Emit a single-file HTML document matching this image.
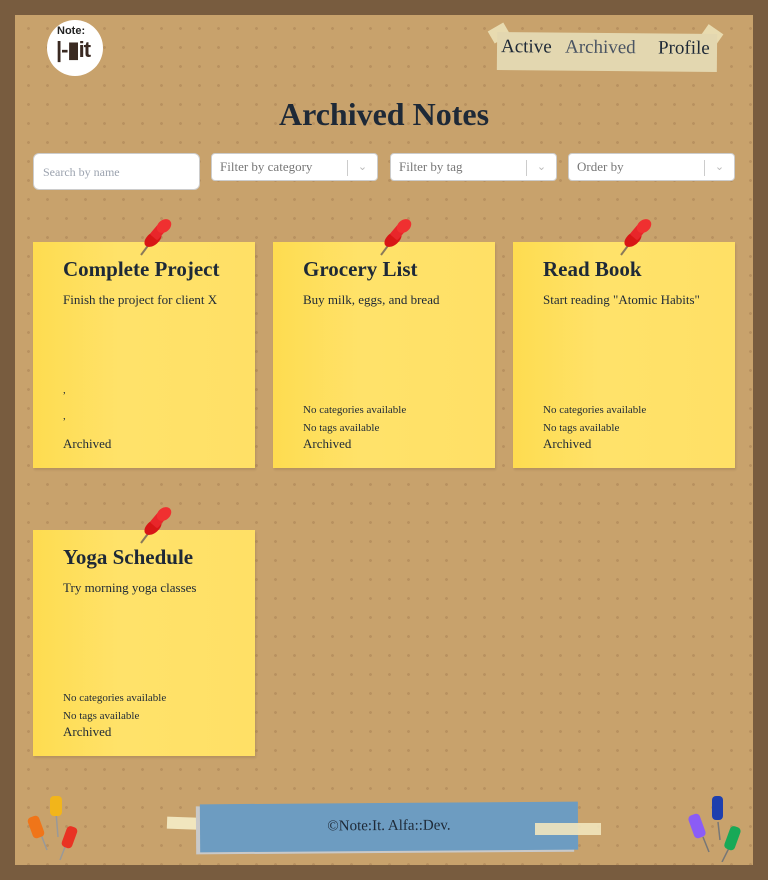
<!DOCTYPE html>
<html><head><meta charset="utf-8"><style>
*{box-sizing:border-box;margin:0;padding:0}
body{width:768px;height:880px;background:#785c3f;font-family:"Liberation Serif",serif;color:#1e2937;position:relative;overflow:hidden}
.board{position:absolute;left:15px;top:15px;width:738px;height:850px;background-color:#c8a26c;background-image:radial-gradient(circle,#b89160 1.3px,transparent 1.6px);background-size:19px 19px;background-position:4px 4px}
.logo{position:absolute;left:47px;top:20px;width:56px;height:56px;border-radius:50%;background:#fff}
.logo .a{position:absolute;left:10px;top:5px;font:bold 11px "Liberation Sans",sans-serif;color:#222}
.logo .b{position:absolute;left:9px;top:17px;font:bold 22px "Liberation Sans",sans-serif;color:#3a2a22;letter-spacing:-1px}
.nav{position:absolute;left:497px;top:33px;width:220px;height:38px;background:#e3d7b0;transform:rotate(.5deg)}
.nav span{position:absolute;top:4px;font-size:19px}
.title{position:absolute;top:96px;width:768px;text-align:center;font-size:32px;font-weight:bold}
.inp{position:absolute;background:#fff;border:1px solid #ccc;border-radius:4px;font-size:13px;color:#777}
.inp .s{position:absolute;right:0;top:6px;width:30px;height:16px;border-left:1px solid #ccc;color:#bbb;text-align:center;font-size:11px}
.card{position:absolute;width:222px;height:226px;background:linear-gradient(90deg,#fedc50,#ffe26a 40%,#ffe066);box-shadow:1px 2px 2px rgba(0,0,0,.1)}
.card h2{position:absolute;left:30px;top:15px;font-size:21px;font-weight:bold}
.card .d{position:absolute;left:30px;top:50px;font-size:13px}
.card .m{position:absolute;left:30px;font-size:11px}
.card .ar{position:absolute;left:30px;top:194px;font-size:13px}
.pin{position:absolute}
.foot{position:absolute;left:200px;top:803px;width:378px;height:48px;background:#6d9cc1;transform:rotate(-.4deg);box-shadow:-4px 2px 0 #c9c9c9}
.tape{position:absolute;background:#f1e6be;height:12px}
</style></head><body>
<div class="board"></div>
<div class="logo"><div class="a">Note:</div><div class="b">|-▮it</div></div>
<div style="position:absolute;left:490px;top:26px;width:18px;height:14px;background:#e8dbb0;transform:rotate(-30deg)"></div>
<div style="position:absolute;left:703px;top:28px;width:18px;height:14px;background:#e8dbb0;transform:rotate(35deg)"></div>
<div class="nav"><span style="left:4px">Active</span><span style="left:68px;color:#4b5563">Archived</span><span style="left:161px">Profile</span></div>
<div class="title">Archived Notes</div>
<div class="inp" style="left:33px;top:153px;width:167px;height:37px;border-radius:6px"><span style="position:absolute;left:9px;top:11px;font-size:12px;color:#9ca3af">Search by name</span></div>
<div class="inp" style="left:211px;top:153px;width:167px;height:28px"><span style="position:absolute;left:8px;top:5px">Filter by category</span><div class="s">⌄</div></div>
<div class="inp" style="left:390px;top:153px;width:167px;height:28px"><span style="position:absolute;left:8px;top:5px">Filter by tag</span><div class="s">⌄</div></div>
<div class="inp" style="left:568px;top:153px;width:167px;height:28px"><span style="position:absolute;left:8px;top:5px">Order by</span><div class="s">⌄</div></div>

<div class="card" style="left:33px;top:242px"><h2>Complete Project</h2><div class="d">Finish the project for client X</div><div class="m" style="top:142px">,</div><div class="m" style="top:168px">,</div><div class="ar">Archived</div></div>
<div class="card" style="left:273px;top:242px"><h2>Grocery List</h2><div class="d">Buy milk, eggs, and bread</div><div class="m" style="top:162px">No categories available</div><div class="m" style="top:180px">No tags available</div><div class="ar">Archived</div></div>
<div class="card" style="left:513px;top:242px"><h2>Read Book</h2><div class="d">Start reading "Atomic Habits"</div><div class="m" style="top:162px">No categories available</div><div class="m" style="top:180px">No tags available</div><div class="ar">Archived</div></div>
<div class="card" style="left:33px;top:530px"><h2>Yoga Schedule</h2><div class="d">Try morning yoga classes</div><div class="m" style="top:162px">No categories available</div><div class="m" style="top:180px">No tags available</div><div class="ar">Archived</div></div>

<svg width="0" height="0" style="position:absolute"><defs><g id="pin"><line x1="3" y1="38" x2="12" y2="26" stroke="#8a7a5a" stroke-width="2"/><ellipse cx="15" cy="22" rx="10" ry="6" fill="#d81616" transform="rotate(-40 15 22)"/><rect x="15" y="9" width="10" height="13" rx="2" fill="#e8262a" transform="rotate(40 20 15)"/><ellipse cx="26" cy="9" rx="8" ry="6" fill="#f03030" transform="rotate(-40 26 9)"/></g></defs></svg>
<svg class="pin" style="left:138px;top:217px" width="40" height="42"><use href="#pin"/></svg>
<svg class="pin" style="left:378px;top:217px" width="40" height="42"><use href="#pin"/></svg>
<svg class="pin" style="left:618px;top:217px" width="40" height="42"><use href="#pin"/></svg>
<svg class="pin" style="left:138px;top:505px" width="40" height="42"><use href="#pin"/></svg>

<div class="tape" style="left:167px;top:818px;width:78px;transform:rotate(2deg)"></div>
<div class="foot"><div style="position:absolute;width:100%;top:15px;text-align:center;font-size:15px;color:#1e2937">©Note:It. Alfa::Dev.</div></div>
<div class="tape" style="left:535px;top:823px;width:66px;opacity:.9"></div>

<svg style="position:absolute;left:22px;top:792px" width="60" height="70">
<line x1="34" y1="20" x2="36" y2="45" stroke="#999" stroke-width="1.5"/><rect x="28" y="4" width="12" height="20" rx="4" fill="#f2b51a"/>
<line x1="18" y1="40" x2="25" y2="58" stroke="#999" stroke-width="1.5"/><rect x="8" y="24" width="12" height="22" rx="4" fill="#f07519" transform="rotate(-20 14 35)"/>
<line x1="45" y1="50" x2="38" y2="68" stroke="#999" stroke-width="1.5"/><rect x="42" y="34" width="11" height="22" rx="4" fill="#e93323" transform="rotate(20 47 45)"/>
</svg>
<svg style="position:absolute;left:685px;top:792px" width="60" height="70">
<line x1="33" y1="30" x2="35" y2="48" stroke="#777" stroke-width="1.5"/><rect x="27" y="4" width="11" height="24" rx="4" fill="#1e3fae"/>
<line x1="18" y1="45" x2="24" y2="60" stroke="#777" stroke-width="1.5"/><rect x="6" y="22" width="12" height="24" rx="4" fill="#8b5cf6" transform="rotate(-20 12 34)"/>
<line x1="44" y1="56" x2="37" y2="70" stroke="#777" stroke-width="1.5"/><rect x="42" y="34" width="11" height="24" rx="4" fill="#18a957" transform="rotate(20 47 46)"/>
</svg>
</body></html>
